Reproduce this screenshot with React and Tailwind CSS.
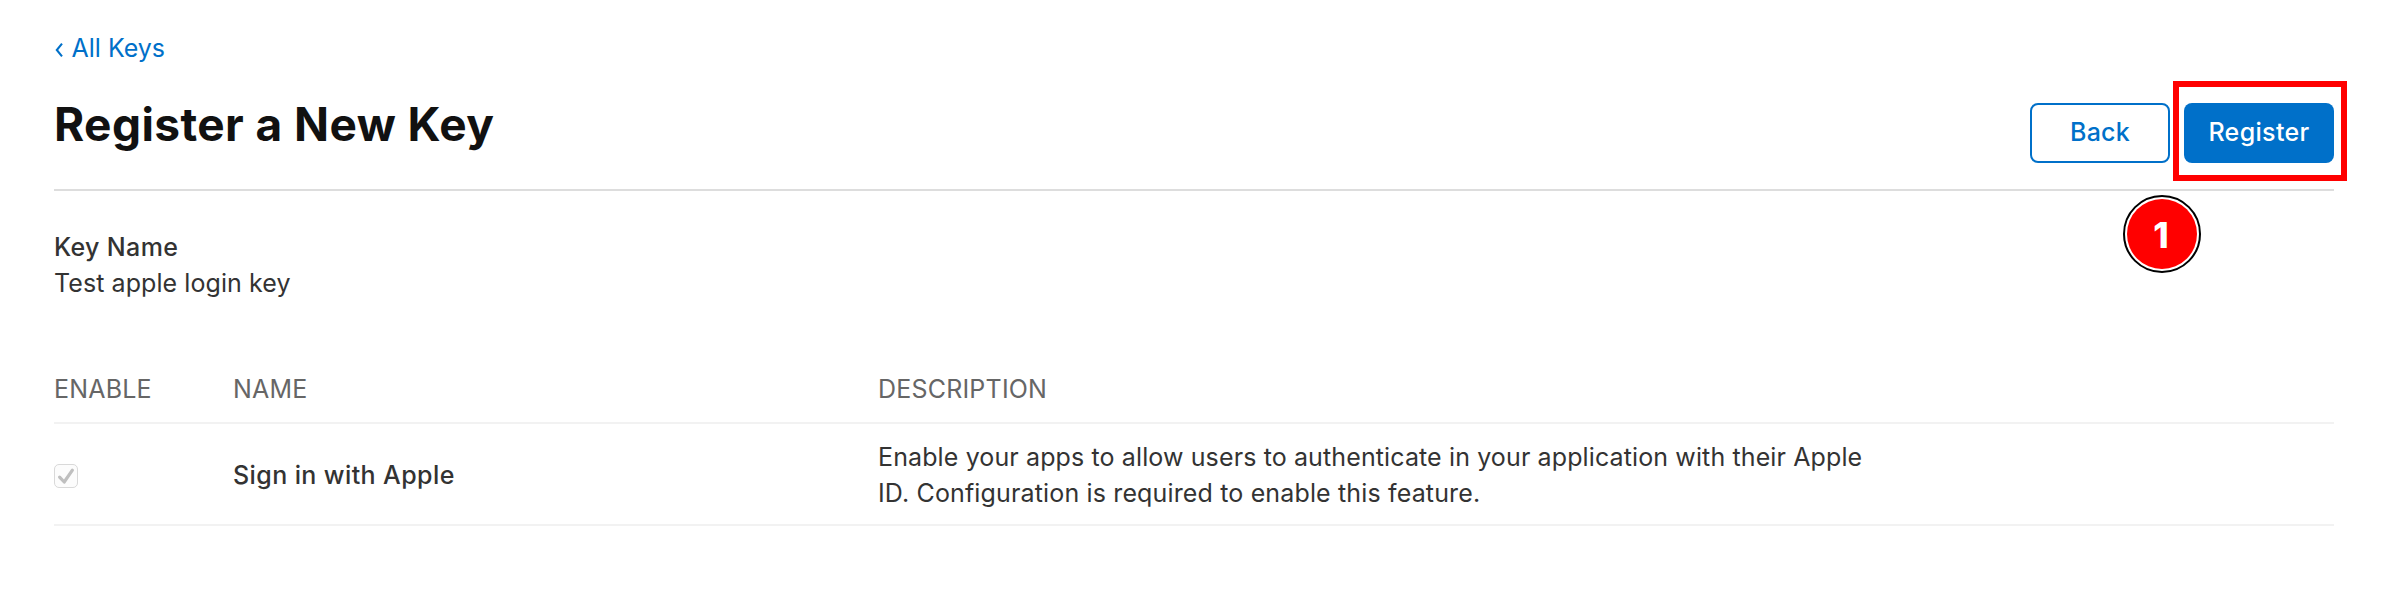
import React from "react";

function Checkbox() {
  return (
    <span role="checkbox" aria-checked="true" aria-disabled="true" className="flex size-6 rounded-[5px] border border-[#d9d9d9] bg-[#fcfcfc]">
      <svg viewBox="0 0 22 22" className="size-[22px]" fill="none" stroke="#bfbfbf" strokeWidth="3.2" strokeLinecap="round" strokeLinejoin="round">
        <path d="M4.6 12.2 L9.2 17 L17.4 5.2" />
      </svg>
    </span>
  );
}

const columns = "grid grid-cols-[179px_645px_1fr] border-b-2 border-[#f2f2f2]";

export default function App() {
  return (
    <main className="relative h-[608px] w-[2404px] bg-white pr-[70px] pl-[54px] font-['Inter',sans-serif] text-[25px] leading-9 text-[#333]">
      <nav className="flex h-[66px] pt-[30px]">
        <a href="#" className="flex h-9 items-center text-[#0070c9]">
          <svg viewBox="0 0 8 14" className="mt-1 mr-[8.5px] ml-px h-3.5 w-2" fill="none" stroke="currentColor" strokeWidth="2.1">
            <path d="M7 0.7 L1.8 7 L7 13.3" />
          </svg>
          <span>All Keys</span>
        </a>
      </nav>

      <header className="flex h-[125px] justify-between border-b-2 border-[#ddd]">
        <h1 className="pt-[30px] text-[46px] leading-[56px] font-bold tracking-[0.42px] text-[#111]">Register a New Key</h1>
        <div className="flex gap-3.5 pt-[37px]">
          <button className="h-[60px] w-[140px] rounded-lg border-2 border-[#0070c9] pb-0.5 font-medium tracking-[0.2px] text-[#0070c9]">Back</button>
          <button className="h-[60px] w-[150px] rounded-lg bg-[#0070c9] pb-0.5 font-medium tracking-[0.35px] text-white">Register</button>
        </div>
      </header>

      <section className="h-[147px] pt-[38px]">
        <h2 className="font-medium tracking-[0.35px]">Key Name</h2>
        <p className="tracking-[0.08px]">Test apple login key</p>
      </section>

      <section>
        <div className={`${columns} h-[86px] pt-[33px] tracking-[0.2px] text-[#666]`}>
          <span>ENABLE</span>
          <span>NAME</span>
          <span>DESCRIPTION</span>
        </div>
        <div className={`${columns} h-[102px]`}>
          <div className="pt-10"><Checkbox /></div>
          <div className="pt-[33px] font-medium tracking-[0.4px]">Sign in with Apple</div>
          <p className="pt-[15px] tracking-[0.12px]">
            Enable your apps to allow users to authenticate in your application with their Apple
            <br />
            <span className="tracking-[0.15px]">ID. Configuration is required to enable this feature.</span>
          </p>
        </div>
      </section>

      <div className="absolute top-[81px] left-[2173px] h-[100px] w-[174px] border-[6px] border-[#f00]" />
      <div className="absolute top-[195px] left-[2123px] flex size-[78px] items-center justify-center rounded-full border-2 border-black bg-white">
        <div className="flex size-[70px] items-center justify-center rounded-full bg-[#f00] pt-0.5 pr-0.5 text-[35px] font-extrabold text-white">1</div>
      </div>
    </main>
  );
}
